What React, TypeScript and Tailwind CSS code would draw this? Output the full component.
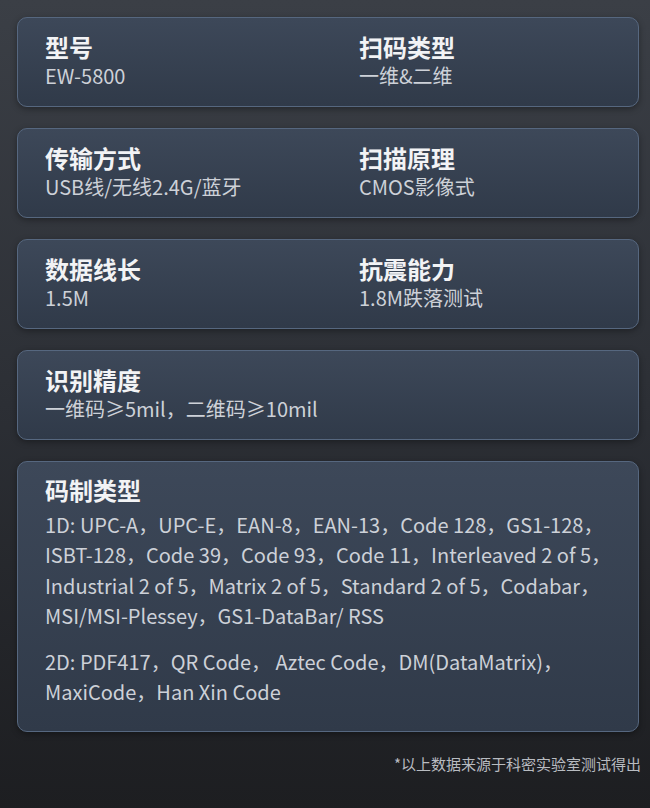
const FONT = "font-['Noto_Sans_CJK_SC','Noto_Sans',sans-serif]";

const pairs = [
  [
    { label: '型号', value: 'EW-5800' },
    { label: '扫码类型', value: '一维&二维' },
  ],
  [
    { label: '传输方式', value: 'USB线/无线2.4G/蓝牙' },
    { label: '扫描原理', value: 'CMOS影像式' },
  ],
  [
    { label: '数据线长', value: '1.5M' },
    { label: '抗震能力', value: '1.8M跌落测试' },
  ],
];

const oneD = [
  '1D: UPC-A，UPC-E，EAN-8，EAN-13，Code 128，GS1-128，',
  'ISBT-128，Code 39，Code 93，Code 11，Interleaved 2 of 5，',
  'Industrial 2 of 5，Matrix 2 of 5，Standard 2 of 5，Codabar，',
  'MSI/MSI-Plessey，GS1-DataBar/ RSS',
];

const twoD = ['2D: PDF417，QR Code， Aztec Code，DM(DataMatrix)，', 'MaxiCode，Han Xin Code'];

function Card({ children, className = '' }: { children: React.ReactNode; className?: string }) {
  return (
    <div
      className={`rounded-[10px] border border-[#56677f] bg-gradient-to-b from-[#3d4859] to-[#303a49] shadow-[0_2px_6px_rgba(0,0,0,0.35)] px-[27px] ${className}`}
    >
      {children}
    </div>
  );
}

function Field({ label, value }: { label: string; value: string }) {
  return (
    <div className="flex flex-col">
      <span className="text-[24px] leading-[30px] font-bold text-[#f2f3f5]">{label}</span>
      <span className="text-[20px] leading-[28px] text-[#cdd1d8]">{value}</span>
    </div>
  );
}

export default function App() {
  return (
    <div className={`${FONT} w-[650px] h-[808px] bg-gradient-to-b from-[#3b3f46] via-[#2c2f35] to-[#1d1e21] pt-[17px] px-[17px]`}>
      <div className="flex flex-col gap-[21px] w-[622px]">
        {pairs.map((row, i) => (
          <Card key={i} className="h-[90px] pt-[14px]">
            <div className="grid grid-cols-[314px_1fr]">
              {row.map((f) => (
                <Field key={f.label} label={f.label} value={f.value} />
              ))}
            </div>
          </Card>
        ))}

        <Card className="h-[90px] pt-[14px]">
          <Field label="识别精度" value="一维码≥5mil，二维码≥10mil" />
        </Card>

        <Card className="h-[271px] pt-[13px]">
          <div className="text-[24px] leading-[30px] font-bold text-[#f2f3f5]">码制类型</div>
          <div className="mt-[5px] text-[20px] leading-[30.4px] text-[#cdd1d8]">
            {oneD.map((l) => (
              <div key={l} className="whitespace-nowrap">{l}</div>
            ))}
          </div>
          <div className="mt-[15px] text-[20px] leading-[30.4px] text-[#cdd1d8]">
            {twoD.map((l) => (
              <div key={l} className="whitespace-nowrap">{l}</div>
            ))}
          </div>
        </Card>
      </div>

      <div className="w-[624px] mt-[22px] text-right text-[15px] leading-[20px] text-[#b9bcc1]">
        *以上数据来源于科密实验室测试得出
      </div>
    </div>
  );
}
